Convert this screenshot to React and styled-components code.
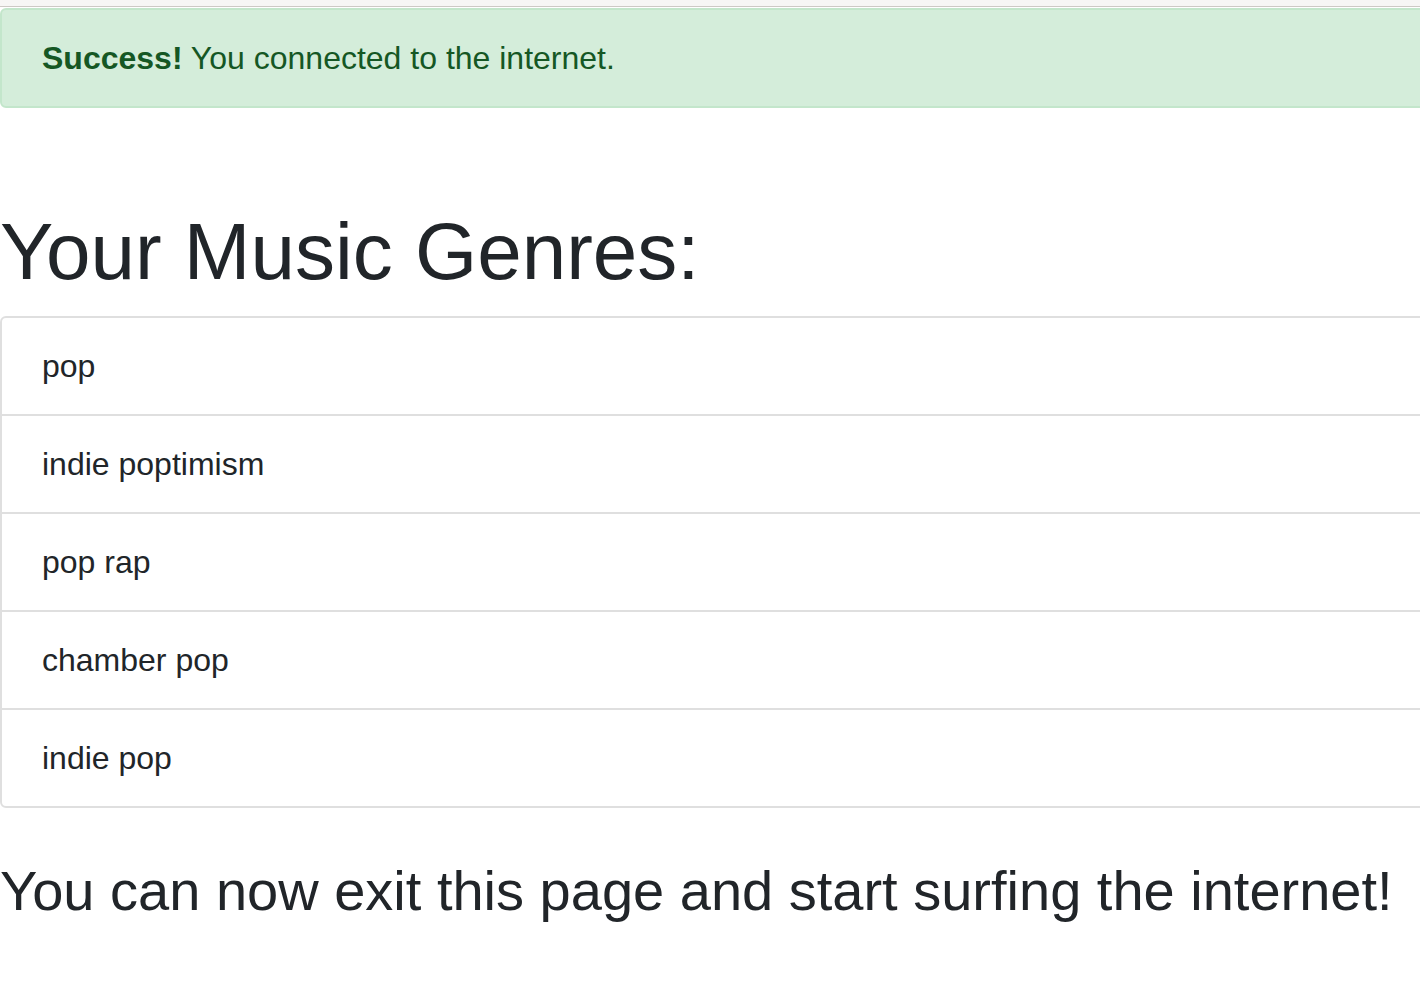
import React from 'react'
import styled, {createGlobalStyle} from 'styled-components'

const GlobalStyle = createGlobalStyle`
  html, body {
    margin: 0;
    padding: 0;
    overflow: hidden;
    background: #fff;
  }
  body {
    font-family: "Liberation Sans", Arial, sans-serif;
    color: #212529;
  }
`

const TopBar = styled.div`
  height: 6px;
  background: #f7f6f5;
  border-bottom: 1px solid #cdc9c5;
`

const Page = styled.div`
  width: 1460px;
`

const Alert = styled.div`
  margin-top: 1px;
  padding: 24px 40px;
  background: #d4edda;
  border: 2px solid #c3e6cb;
  border-radius: 6px;
  color: #155724;
  font-size: 32px;
  line-height: 48px;
`

const Heading = styled.h1`
  margin: 96px 0 16px;
  font-size: 80px;
  font-weight: 400;
  line-height: 1.2;
`

const List = styled.ul`
  margin: 0;
  padding: 0;
  list-style: none;
  border: 2px solid #dfdfdf;
  border-radius: 6px;
`

const Item = styled.li`
  padding: 24px 40px;
  font-size: 32px;
  line-height: 48px;
  & + & {
    border-top: 2px solid #dfdfdf;
  }
`

const Closing = styled.h2`
  margin: 49px 0 0;
  font-size: 56px;
  font-weight: 400;
  line-height: 1.2;
`

const genres = ['pop', 'indie poptimism', 'pop rap', 'chamber pop', 'indie pop']

export default function App() {
  return (
    <>
      <GlobalStyle />
      <TopBar />
      <Page>
        <Alert>
          <strong>Success!</strong> You connected to the internet.
        </Alert>
        <Heading>Your Music Genres:</Heading>
        <List>
          {genres.map(g => (
            <Item key={g}>{g}</Item>
          ))}
        </List>
        <Closing>You can now exit this page and start surfing the internet!</Closing>
      </Page>
    </>
  )
}
